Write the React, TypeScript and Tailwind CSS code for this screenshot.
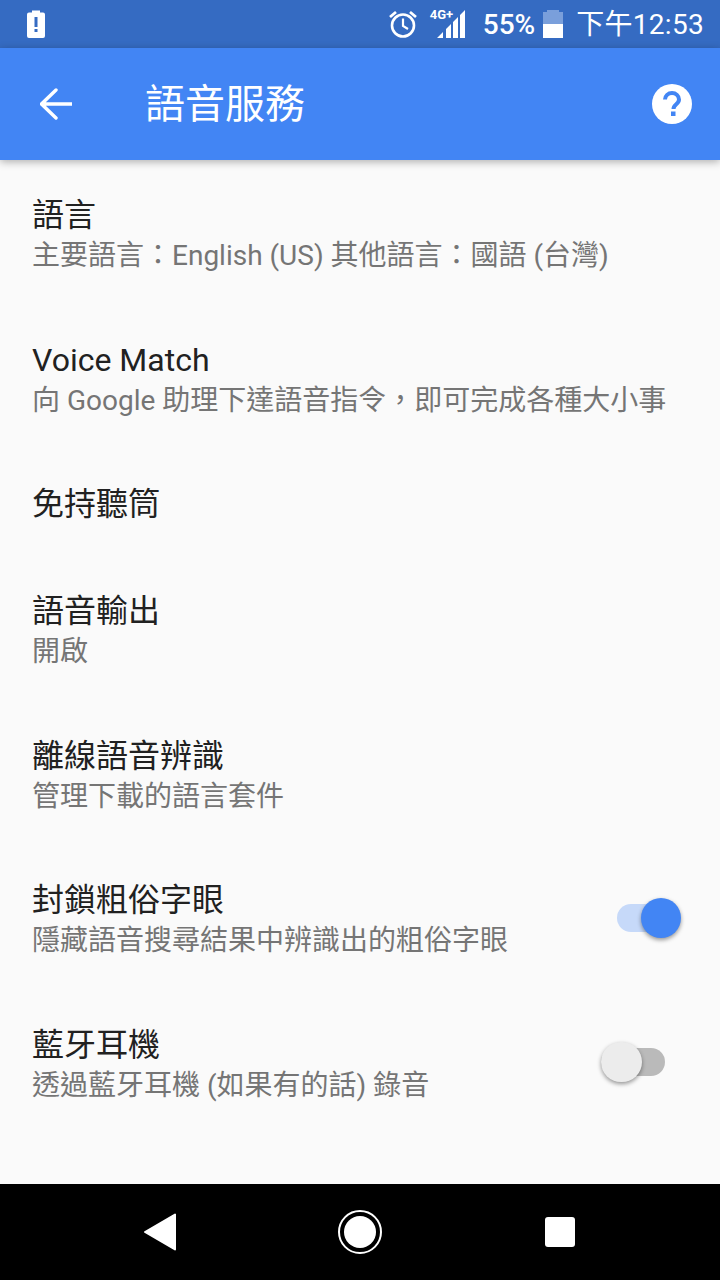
import React from 'react';

interface Setting {
  title: string;
  summary?: string;
  toggle?: boolean;
}

const settings: Setting[] = [
  { title: '語言', summary: '主要語言：English (US) 其他語言：國語 (台灣)' },
  { title: 'Voice Match', summary: '向 Google 助理下達語音指令，即可完成各種大小事' },
  { title: '免持聽筒' },
  { title: '語音輸出', summary: '開啟' },
  { title: '離線語音辨識', summary: '管理下載的語言套件' },
  { title: '封鎖粗俗字眼', summary: '隱藏語音搜尋結果中辨識出的粗俗字眼', toggle: true },
  { title: '藍牙耳機', summary: '透過藍牙耳機 (如果有的話) 錄音', toggle: false },
];

const Toggle: React.FC<{ on: boolean }> = ({ on }) =>
  on ? (
    <div className="relative w-[63px] h-[28px] mr-[40px] mb-[6px] rounded-full bg-[#c6d9f9]">
      <div className="absolute right-[-1px] top-[-6px] w-[40px] h-[40px] rounded-full bg-[#4285f4] shadow-[0_2px_4px_rgba(0,0,0,0.4)]" />
    </div>
  ) : (
    <div className="relative w-[64px] h-[28px] mr-[55px] mb-[7px] rounded-full bg-[#bababa]">
      <div className="absolute left-0 top-[-6px] w-[41px] h-[40px] rounded-full bg-[#ececec] shadow-[0_2px_4px_rgba(0,0,0,0.4)]" />
    </div>
  );

const SettingRow: React.FC<Setting> = ({ title, summary, toggle }) => (
  <div className={`flex items-center justify-between pl-[32px] ${summary ? 'h-[144.5px] pt-[1px]' : 'h-[107px] pb-[4px]'}`}>
    <div className="flex flex-col">
      <span className="text-[32px] leading-[40px] text-[#212121]">{title}</span>
      <span className={summary ? 'text-[28px] leading-[40px] mt-[1px] text-[#757575] whitespace-nowrap' : 'hidden'}>{summary}</span>
    </div>
    {toggle !== undefined && <Toggle on={toggle} />}
  </div>
);

const StatusBar = () => (
  <div className="h-[48px] shrink-0 bg-[#356bc2] flex items-center justify-between text-white">
    <svg className="ml-[27px]" width="18" height="28" viewBox="0 0 18 28">
      <path fill="#fff" d="M5 0.5h8v2h3a2 2 0 0 1 2 2V26a2 2 0 0 1-2 2H2a2 2 0 0 1-2-2V4.5a2 2 0 0 1 2-2h3z" />
      <rect x="7.5" y="7" width="3" height="10" fill="#356bc2" />
      <rect x="7.5" y="19" width="3" height="3" fill="#356bc2" />
    </svg>
    <div className="flex items-center mr-[16px]">
      <svg width="30" height="30" viewBox="0 0 30 30" fill="none" stroke="#fff">
        <circle cx="15" cy="16.5" r="11" strokeWidth="2.6" />
        <path d="M15 9.5v7.5l5 3" strokeWidth="2.2" />
        <path d="M2 8l6-5M28 8l-6-5" strokeWidth="2.8" />
      </svg>
      <div className="relative w-[33px] h-[30px] ml-[14px]">
        <span className="absolute left-[-2px] top-[-1px] text-[13px] leading-[14px] font-bold">4G+</span>
        <svg className="absolute inset-0" width="33" height="30" viewBox="0 0 33 30">
          <path fill="#fff" d="M5 29L11 23V29ZM14 29V20L19 15V29ZM21 29V13L26 8V29ZM28 29V6L33 1V29Z" />
        </svg>
      </div>
      <span className="ml-[18px] mt-[1px] text-[28px] leading-[34px] font-medium">55%</span>
      <div className="relative ml-[8px] w-[20px] h-[26px] mt-[2px] bg-[#7a9fdb]">
        <div className="absolute left-[4px] top-[-2px] w-[12px] h-[2px] bg-[#7a9fdb]" />
        <div className="absolute left-0 right-0 bottom-0 h-[14px] bg-white" />
      </div>
      <span className="ml-[13px] text-[28px] leading-[34px] mt-[1px] tracking-[0.3px]">下午12:53</span>
    </div>
  </div>
);

const AppBar = () => (
  <div className="relative z-10 h-[112px] shrink-0 bg-[#4285f4] flex items-center shadow-[0_2px_8px_rgba(0,0,0,0.3)] text-white">
    <svg className="ml-[40px]" width="32" height="32" viewBox="0 0 32 32" fill="none" stroke="#fff" strokeWidth="3.4" strokeLinecap="round">
      <path d="M32 16H2M16 2L1.500 16 16 30" />
    </svg>
    <span className="ml-[73px] mt-[2px] text-[40px] leading-[48px]">語音服務</span>
    <svg className="ml-auto mr-[28px]" width="40" height="40" viewBox="0 0 40 40">
      <circle cx="20" cy="20" r="20" fill="#fff" />
      <path d="M13 15.500a7 6.500 0 0 1 14 0c0 5-5.500 4.500-5.500 9.500" fill="none" stroke="#4285f4" strokeWidth="4" />
      <rect x="19" y="27.500" width="4.500" height="4.500" fill="#4285f4" />
    </svg>
  </div>
);

const NavBar = () => (
  <div className="h-[96px] shrink-0 bg-black flex items-center justify-center relative">
    <svg className="absolute left-[144px] top-[29px]" width="32" height="38" viewBox="0 0 32 38">
      <path fill="#fff" stroke="#fff" strokeWidth="2" strokeLinejoin="round" d="M31 1.500v35L1 19z" />
    </svg>
    <div className="w-[44px] h-[44px] rounded-full border-2 border-white flex items-center justify-center">
      <div className="w-[32px] h-[32px] rounded-full bg-white" />
    </div>
    <div className="absolute left-[545px] top-[33px] w-[30px] h-[30px] rounded-[3px] bg-white" />
  </div>
);

export default function App() {
  return (
    <div className="w-[720px] h-[1280px] flex flex-col bg-[#fafafa] overflow-hidden font-['Roboto','Noto_Sans_CJK_TC',sans-serif]">
      <StatusBar />
      <AppBar />
      <div className="flex-1 pt-[3px]">
        {settings.map((s) => (
          <SettingRow key={s.title} {...s} />
        ))}
      </div>
      <NavBar />
    </div>
  );
}
